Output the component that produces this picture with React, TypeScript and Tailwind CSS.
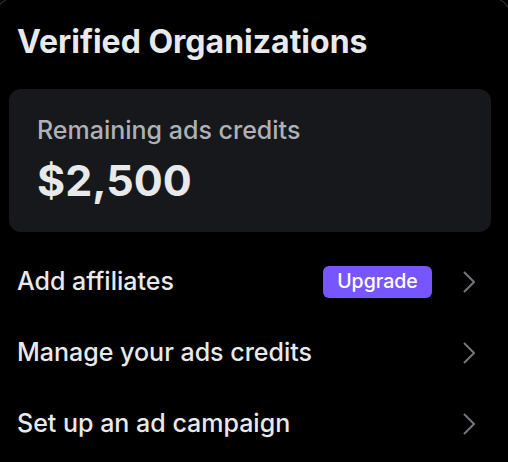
import React from 'react';

const rows = [
  { label: 'Add affiliates', badge: 'Upgrade' },
  { label: 'Manage your ads credits' },
  { label: 'Set up an ad campaign' },
];

function Chevron() {
  return (
    <svg width="12" height="22" viewBox="0 0 12 22" fill="none" className="text-[#71767b]">
      <path d="M1 1 L11 11 L1 21" stroke="currentColor" strokeWidth="2" />
    </svg>
  );
}

export default function App() {
  return (
    <div className="w-[508px] h-[462px] overflow-hidden bg-black font-['Inter',sans-serif] text-[#e7e9ea]">
      {/* Panel outline, only its top-right corner shows */}
      <div className="w-[514px] h-[480px] -mt-[2px] -ml-[4px] border border-[#3a3d41] rounded-2xl pt-[1px] pl-[3px]">
        <h2 className="px-[17px] pt-[22px] text-[32px] leading-[40px] font-bold">
          Verified Organizations
        </h2>

        {/* Credits card */}
        <div className="ml-[9px] mt-[27px] w-[482px] h-[143px] rounded-xl bg-[#17181c] px-[28px] pt-[26px]">
          <div className="text-[25px] leading-[30px] font-medium text-[#aeb1b6]">Remaining ads credits</div>
          <div className="mt-[9px] text-[43px] leading-[52px] font-bold">$2,500</div>
        </div>

        {/* Links */}
        <div className="mt-[14px] flex flex-col w-[508px]">
          {rows.map((row) => (
            <div key={row.label} className="flex items-center h-[71px] pl-[17px] pr-[33px]">
              <span className="flex-1 text-[25px] font-medium">{row.label}</span>
              {row.badge && (
                <span className="mr-[31px] rounded-md bg-[#7856ff] w-[109px] h-[32px] flex items-center justify-center text-[19.5px] font-medium text-white">
                  {row.badge}
                </span>
              )}
              <Chevron />
            </div>
          ))}
        </div>
      </div>
    </div>
  );
}
